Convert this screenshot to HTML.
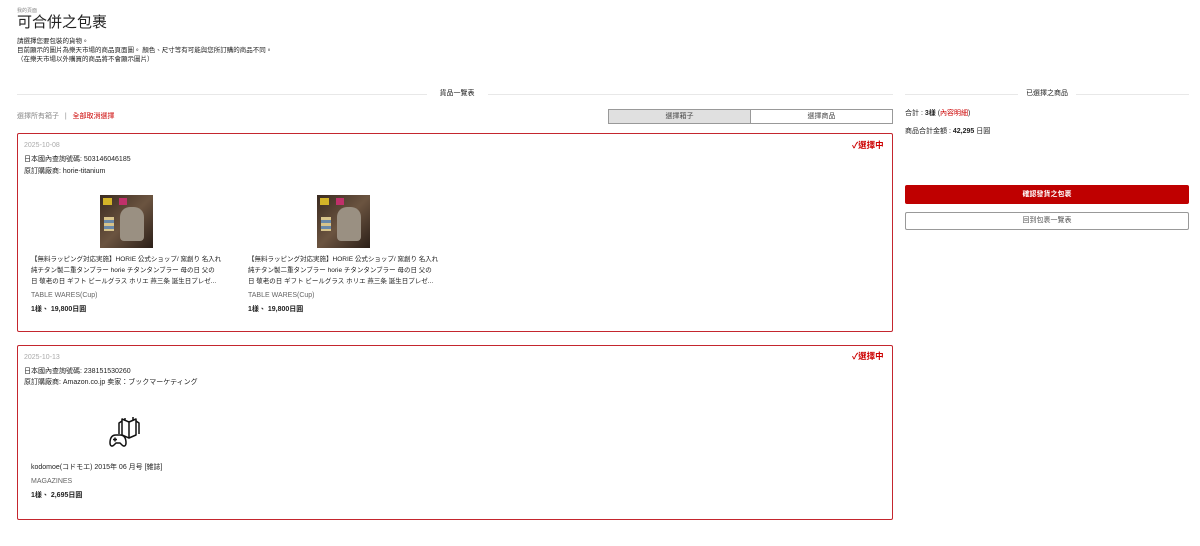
<!DOCTYPE html>
<html><head><meta charset="utf-8"><style>
*{margin:0;padding:0;box-sizing:border-box}
body{width:1200px;height:546px;background:#fff;font-family:"Liberation Sans","Noto Sans CJK TC",sans-serif;color:#222;position:relative;overflow:hidden}
.a{position:absolute;white-space:nowrap}
.s{font-size:7px;line-height:10px}
.p{font-size:6.5px}
.sep{position:absolute;height:1px;background:#e8e8e8}
.box{position:absolute;border:1.5px solid #c4262e;border-radius:2px}
.red{color:#c00}
.img{position:absolute;width:53px;height:53px;background:linear-gradient(135deg,#3a2a20,#6b5440 50%,#2b1f18)}
.img:before{content:"";position:absolute;left:3px;top:3px;width:9px;height:7px;background:#d4b428}
.img:after{content:"";position:absolute;left:19px;top:3px;width:8px;height:7px;background:#c0306a}
.cup{position:absolute;left:20px;top:12px;width:24px;height:34px;border-radius:10px 10px 4px 4px;background:#9a9082}
.sw{position:absolute;left:4px;top:22px;width:10px;height:14px;background:repeating-linear-gradient(#d8c48a 0 3px,#6a88a8 3px 6px)}
</style></head><body>
<div class="a" style="left:17px;top:8px;font-size:5px;line-height:6px;color:#888">我的頁面</div>
<div class="a" style="left:17px;top:14px;font-size:15px;line-height:18px">可合併之包裹</div>
<div class="a s p" style="left:17px;top:37px">請選擇您要包裝的貨物。</div>
<div class="a s p" style="left:17px;top:46px">目前顯示的圖片為樂天市場的商品頁面圖。 顏色、尺寸等有可能與您所訂購的商品不同。</div>
<div class="a s p" style="left:17px;top:55px">（在樂天市場以外購買的商品將不會顯示圖片）</div>

<div class="sep" style="left:17px;top:94px;width:410px"></div>
<div class="a s" style="left:432px;top:89px;width:50px;text-align:center">貨品一覽表</div>
<div class="sep" style="left:488px;top:94px;width:405px"></div>

<div class="a s" style="left:17px;top:112px;color:#888">選擇所有箱子 &nbsp; | &nbsp; <span class="red">全部取消選擇</span></div>
<div class="a s" style="left:608px;top:109px;width:143px;height:15px;background:#e0e0e0;border:1px solid #999;text-align:center;line-height:13px;color:#444">選擇箱子</div>
<div class="a s" style="left:750px;top:109px;width:143px;height:15px;background:#fff;border:1px solid #999;text-align:center;line-height:13px;color:#444">選擇商品</div>

<div class="box" style="left:17px;top:133px;width:876px;height:199px"></div>
<div class="a s" style="left:24px;top:141px;color:#aaa">2025-10-08</div>
<div class="a red" style="left:852px;top:139px;font-size:8.5px;font-weight:bold">✓選擇中</div>
<div class="a s" style="left:24px;top:155px">日本國內查詢號碼: 503146046185</div>
<div class="a s" style="left:24px;top:167px">原訂購廠商: horie-titanium</div>

<div class="img" style="left:100px;top:195px"><div class="cup"></div><div class="sw"></div></div>
<div class="a s p" style="left:31px;top:254px;line-height:11px">【無料ラッピング対応実施】HORIE 公式ショップ/ 窯創り 名入れ<br>純チタン製二重タンブラー horie チタンタンブラー 母の日 父の<br>日 敬老の日 ギフト ビールグラス ホリエ 燕三条 誕生日プレゼ...</div>
<div class="a s" style="left:31px;top:291px;color:#666">TABLE WARES(Cup)</div>
<div class="a s" style="left:31px;top:305px;font-weight:bold">1樣、 19,800日圓</div>

<div class="img" style="left:317px;top:195px"><div class="cup"></div><div class="sw"></div></div>
<div class="a s p" style="left:248px;top:254px;line-height:11px">【無料ラッピング対応実施】HORIE 公式ショップ/ 窯創り 名入れ<br>純チタン製二重タンブラー horie チタンタンブラー 母の日 父の<br>日 敬老の日 ギフト ビールグラス ホリエ 燕三条 誕生日プレゼ...</div>
<div class="a s" style="left:248px;top:291px;color:#666">TABLE WARES(Cup)</div>
<div class="a s" style="left:248px;top:305px;font-weight:bold">1樣、 19,800日圓</div>

<div class="box" style="left:17px;top:345px;width:876px;height:175px"></div>
<div class="a s" style="left:24px;top:353px;color:#aaa">2025-10-13</div>
<div class="a red" style="left:852px;top:350px;font-size:8.5px;font-weight:bold">✓選擇中</div>
<div class="a s" style="left:24px;top:367px">日本國內查詢號碼: 238151530260</div>
<div class="a s" style="left:24px;top:378px">原訂購廠商: Amazon.co.jp 卖家：ブックマーケティング</div>
<svg class="a" style="left:108px;top:416px" width="38" height="32" viewBox="0 0 38 32" fill="none" stroke="#111" stroke-width="1.5" stroke-linejoin="round">
<path d="M14 19V3l7 3 7-3v16l-7 3z M21 6v16 M14 19l7 3 M17 5V2 M25 4V1"/>
<path d="M14 5l-3 2v11 M28 5l3 2v11"/>
<path d="M2 27c0-5 2-8 6-8h4c4 0 6 3 6 8 0 3-2 4-4 2l-2-2H8l-2 2c-2 2-4 1-4-2z" fill="#fff"/>
<path d="M7 21.5v4M5 23.5h4"/>
</svg>
<div class="a s" style="left:31px;top:463px">kodomoe(コドモエ) 2015年 06 月号 [雑誌]</div>
<div class="a s" style="left:31px;top:477px;color:#666">MAGAZINES</div>
<div class="a s" style="left:31px;top:491px;font-weight:bold">1樣、 2,695日圓</div>

<div class="sep" style="left:905px;top:94px;width:113px"></div>
<div class="a s" style="left:1020px;top:89px;width:54px;text-align:center">已選擇之商品</div>
<div class="sep" style="left:1076px;top:94px;width:113px"></div>
<div class="a s" style="left:905px;top:109px">合計 : <b>3樣</b> (<span class="red">內容明細</span>)</div>
<div class="a s" style="left:905px;top:127px">商品合計金額 : <b>42,295</b> 日圓</div>
<div class="a s" style="left:905px;top:185px;width:284px;height:19px;background:#bf0000;color:#fff;border-radius:2px;text-align:center;line-height:19px;font-weight:bold">確認發貨之包裹</div>
<div class="a s" style="left:905px;top:212px;width:284px;height:18px;border:1px solid #999;border-radius:2px;text-align:center;line-height:16px;color:#555">回到包裹一覽表</div>
</body></html>
